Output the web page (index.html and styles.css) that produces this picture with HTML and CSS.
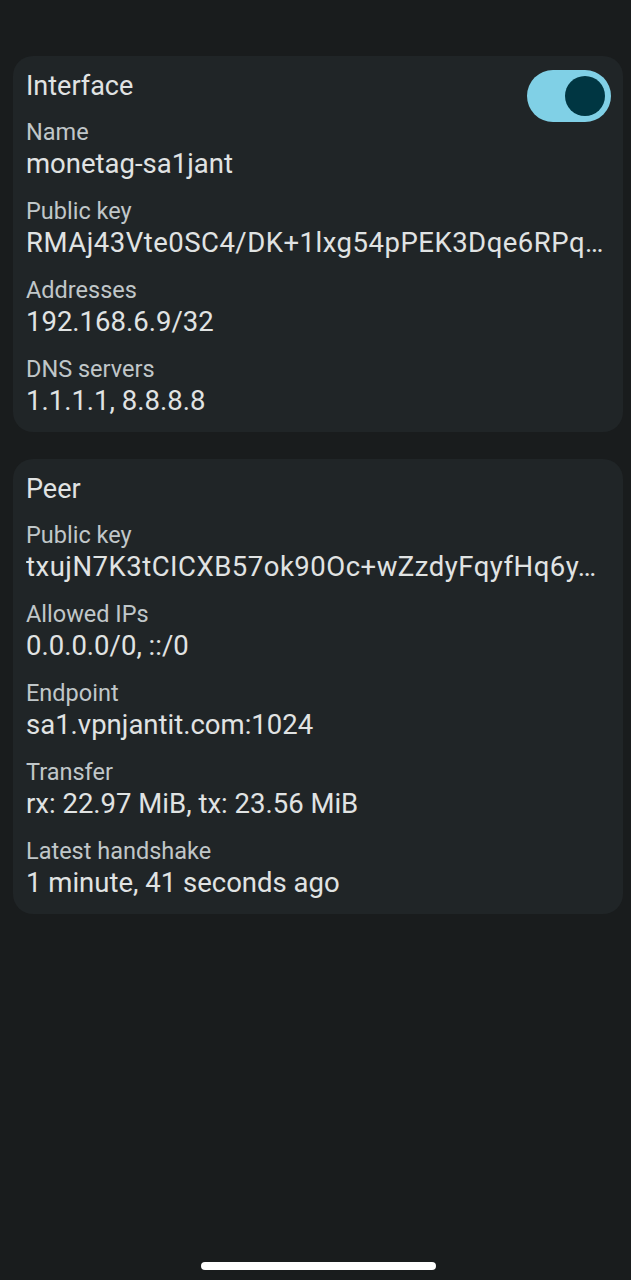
FILE: index.html
```html
<!DOCTYPE html>
<html>
<head>
<meta charset="utf-8">
<link rel="stylesheet" href="styles.css">
</head>
<body>
<div class="screen">
  <section class="card">
    <div class="card-head">
      <h2 class="title">Interface</h2>
      <div class="toggle"><div class="thumb"></div></div>
    </div>
    <div class="row"><div class="label">Name</div><div class="value">monetag-sa1jant</div></div>
    <div class="row"><div class="label">Public key</div><div class="value key">RMAj43Vte0SC4/DK+1lxg54pPEK3Dqe6RPq…</div></div>
    <div class="row"><div class="label">Addresses</div><div class="value">192.168.6.9/32</div></div>
    <div class="row"><div class="label">DNS servers</div><div class="value">1.1.1.1, 8.8.8.8</div></div>
  </section>
  <section class="card">
    <div class="card-head">
      <h2 class="title">Peer</h2>
    </div>
    <div class="row"><div class="label">Public key</div><div class="value key">txujN7K3tCICXB57ok90Oc+wZzdyFqyfHq6y…</div></div>
    <div class="row"><div class="label">Allowed IPs</div><div class="value">0.0.0.0/0, ::/0</div></div>
    <div class="row"><div class="label">Endpoint</div><div class="value">sa1.vpnjantit.com:1024</div></div>
    <div class="row"><div class="label">Transfer</div><div class="value">rx: 22.97 MiB, tx: 23.56 MiB</div></div>
    <div class="row"><div class="label">Latest handshake</div><div class="value">1 minute, 41 seconds ago</div></div>
  </section>
  <div class="spacer"></div>
  <div class="home-bar"></div>
</div>
</body>
</html>
```

FILE: styles.css
```css
html, body {
  margin: 0;
  padding: 0;
  background: #191c1d;
}
body {
  font-family: Roboto, "Noto Sans", sans-serif;
  color: #e0e3e3;
}
.screen {
  width: 631px;
  height: 1280px;
  box-sizing: border-box;
  padding: 56px 8px 0 13px;
  display: flex;
  flex-direction: column;
  gap: 27px;
}
.card {
  background: #202527;
  border-radius: 20px;
  padding: 14px 6px 14px 13px;
  display: flex;
  flex-direction: column;
  gap: 15px;
  min-width: 0;
}
.card-head {
  display: flex;
  align-items: flex-start;
  justify-content: space-between;
  height: 32px;
}
.title {
  margin: 0;
  font-size: 27px;
  font-weight: 400;
  line-height: 32px;
  color: #e0e3e3;
}
.toggle {
  width: 84px;
  height: 52px;
  border-radius: 26px;
  background: #80d0e6;
  margin-right: 6px;
  display: flex;
  align-items: center;
  justify-content: flex-end;
  padding-right: 6px;
  box-sizing: border-box;
  flex-shrink: 0;
}
.thumb {
  width: 40px;
  height: 40px;
  border-radius: 50%;
  background: #003642;
}
.row {
  display: flex;
  flex-direction: column;
  min-width: 0;
}
.label {
  font-size: 23.5px;
  line-height: 30px;
  color: #c0c7c9;
}
.value {
  font-size: 27.5px;
  line-height: 34px;
  color: #e0e3e3;
  white-space: nowrap;
  overflow: hidden;
}
.value.key {
  letter-spacing: 0.5px;
}
.spacer {
  flex: 1;
}
.home-bar {
  align-self: center;
  width: 235px;
  height: 8px;
  border-radius: 4px;
  background: #ffffff;
  margin: 0 0 10px 0;
}
```
